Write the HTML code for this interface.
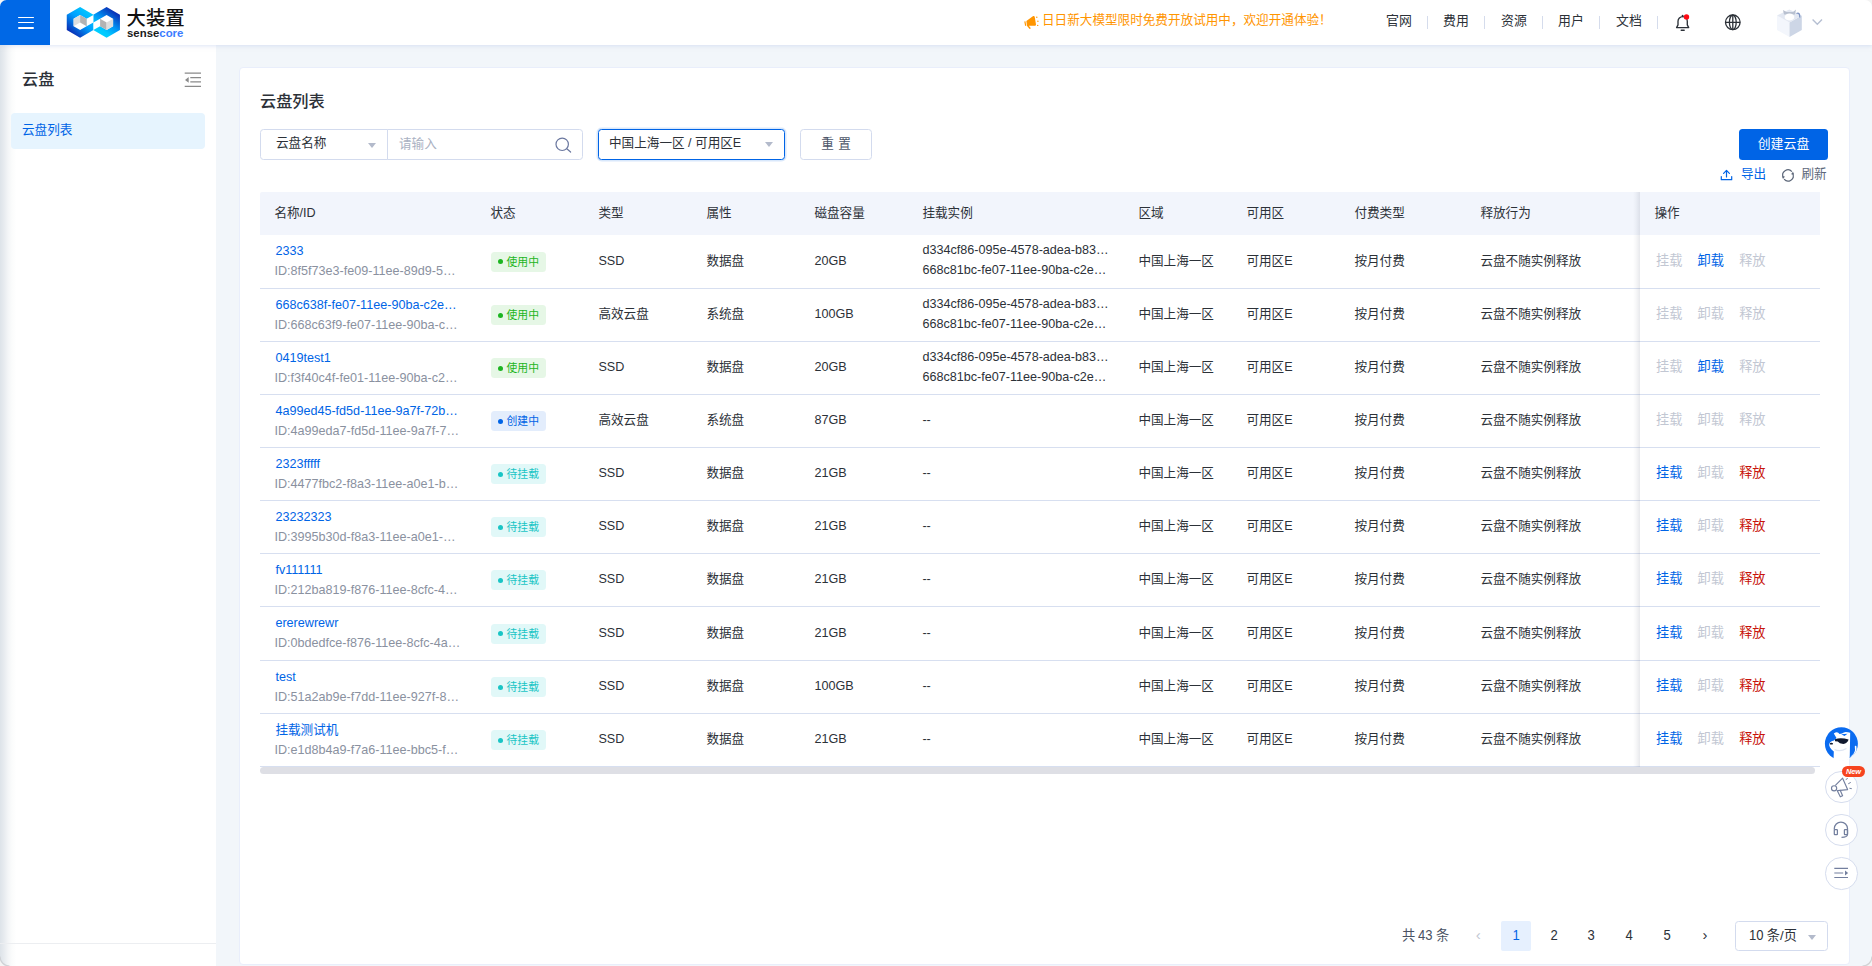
<!DOCTYPE html>
<html lang="zh-CN">
<head>
<meta charset="utf-8">
<title>云盘列表</title>
<style>
*{box-sizing:border-box;margin:0;padding:0}
html,body{width:1872px;height:966px;overflow:hidden}
body{background:#f2f6fa;font-family:"Liberation Sans","Noto Sans CJK SC",sans-serif;font-size:12.6px;line-height:20px;color:#2c3138;position:relative}
svg{display:block;overflow:visible}
/* header */
#hdr{position:absolute;left:0;top:0;width:1872px;height:45px;background:#fff;box-shadow:0 1px 4px rgba(190,203,235,.5);z-index:5}
#burger{position:absolute;left:0;top:0;width:50px;height:45px;background:#0068e6}
#burger i{position:absolute;left:17.5px;width:16.5px;height:1.6px;background:#fff;border-radius:1px}
#logo{position:absolute;left:66px;top:6px}
#brand{position:absolute;left:126.5px;top:5.3px;font-size:19.4px;font-weight:500;color:#111;letter-spacing:0;line-height:26px;white-space:nowrap}
#brand2{position:absolute;left:127px;top:25.2px;font-size:11.4px;font-weight:700;color:#1a1a1a;line-height:16px;white-space:nowrap}
#brand2 b{color:#3b7cff;font-weight:700}
#notice{position:absolute;left:1042px;top:11px;font-size:12.6px;line-height:18px;color:#ff9500;white-space:nowrap}
.nav{position:absolute;top:11px;font-size:12.9px;line-height:20px;color:#2c3138;white-space:nowrap}
.sep{position:absolute;top:16px;width:1px;height:13px;background:#d5dcec}
/* sidebar */
#side{position:absolute;left:0;top:45px;width:216px;height:921px;background:#fff;z-index:2}
#side:before{content:"";position:absolute;left:0;top:0;width:18px;height:100%;background:linear-gradient(90deg,#dde3e9 0,#e7ebef 4px,#f3f5f7 8px,#fbfcfc 12px,#fff 16.5px)}
#sidettl{position:absolute;left:22px;top:23px;font-size:16.2px;font-weight:500;line-height:22px;color:#2c3138}
#sideitem{position:absolute;left:11px;top:68px;width:194px;height:36px;border-radius:4px;background:#e6f4fe;color:#0064e6;font-size:12.6px;line-height:35px;padding-left:11px}
#sidefoot{position:absolute;left:0;top:898px;width:216px;height:1px;background:#eceef1}
/* card */
#card{position:absolute;left:239px;top:67px;width:1611px;height:897.5px;background:#fff;border:1px solid #e9eefb;border-radius:4px}
#ttl{position:absolute;left:260px;top:90px;font-size:16.2px;font-weight:500;line-height:22px;color:#2c3138}
/* filter */
.box{position:absolute;top:129px;height:30.6px;border:1px solid #d3dbee;border-radius:3.5px;background:#fff;line-height:28.6px;white-space:nowrap}
.tri{position:absolute;width:0;height:0;border-left:4.6px solid transparent;border-right:4.6px solid transparent;border-top:5px solid #b3bacb}
#create{position:absolute;left:1739px;top:129px;width:89px;height:31px;background:#0064e6;border-radius:3.5px;color:#fff;text-align:center;line-height:30.5px;font-size:12.9px}
.tool{position:absolute;top:165px;line-height:18px;white-space:nowrap}
/* table */
#tbl{position:absolute;left:260px;top:192px;width:1560px;height:575px;overflow:hidden}
.thead{position:absolute;left:0;top:0;width:100%;height:43px;background:#f2f5fc;border-radius:2px 0 0 0}
.tr{position:absolute;left:0;width:100%;border-bottom:1px solid #d7dff0}
.th,.td{position:absolute;top:0;height:100%;padding-left:14.4px;display:flex;align-items:center;white-space:nowrap}
.td{padding-bottom:2px}.td.c1,.td.c2{padding-bottom:0}
.th{color:#2c3138;padding-bottom:2px}
.c1{left:0;width:216px}.c2{left:216px;width:108px}.c3{left:324px;width:108px}.c4{left:432px;width:108px}.c5{left:540px;width:108px}
.c6{left:648px;width:216px}.c7{left:864px;width:108px}.c8{left:972px;width:108px}.c9{left:1080px;width:126px}.c10{left:1206px;width:180px}
.cop{left:1380px;width:180px;background:#fff;padding-left:16px}
.thead .cop{background:#f2f5fc;padding-left:14.4px}
.two{display:flex;flex-direction:column;line-height:20px;margin-top:-.6px}
.two a{color:#0064e6;padding-left:1px}
.gid{color:#8a919f}
.ins{color:#2c3138}
.tag{display:inline-flex;align-items:center;height:20px;padding:0 7px 0 6.5px;border-radius:3.5px;font-size:10.8px;line-height:20px;margin:.4px 0 0 .7px}
.tag i{display:block;width:5px;height:5px;border-radius:50%;margin-right:4px}
.use{background:#e6f7e6;color:#1cb521}.use i{background:#1cb521}
.new{background:#e3edfc;color:#0064e6}.new i{background:#0064e6}
.wait{background:#e1f8f8;color:#19c5c5}.wait i{background:#19c5c5}
.op{margin-right:15.2px;font-size:13.2px}
.dis{color:#c2c7d3}.lnk{color:#0064e6}.red{color:#c8140a}
#fixshadow{position:absolute;left:1373px;top:0;width:7px;height:100%;background:linear-gradient(90deg,rgba(0,0,0,0),rgba(30,40,70,.035) 45%,rgba(30,40,70,.1))}
#hscroll{position:absolute;left:260px;top:767px;width:1555px;height:7px;border-radius:3.5px;background:#dedfe5}
/* pagination */
.pg{position:absolute;top:921px;height:30px;line-height:30px;white-space:nowrap;text-align:center}
.pn{width:30.6px;color:#2c3138;font-size:15px;line-height:27.5px}
.pn b,.nar{display:inline-block;font-weight:400;transform:scaleX(.87)}
.pact{background:#e6f0fe;color:#0064e6;border-radius:2px}
/* float */
.fb{position:absolute;left:1825px;width:32.4px;height:32.4px;border-radius:50%;background:#fff;border:1px solid #d6ddee;z-index:6}
#newb{position:absolute;left:1842px;top:766px;width:23px;height:11px;border-radius:6px;background:#f6441f;color:#fff;font-size:7.5px;line-height:11px;font-weight:700;font-style:italic;text-align:center;z-index:8;letter-spacing:-.2px}
</style>
</head>
<body>
<div id="hdr">
  <div id="burger"><i style="top:16.5px"></i><i style="top:21.9px"></i><i style="top:27.2px"></i></div>
  <svg id="logo" width="130" height="45" viewBox="0 0 130 45" style="position:absolute;left:0;top:0">
<defs>
<linearGradient id="gl" x1="0.85" y1="0.1" x2="0.2" y2="0.95"><stop offset="0" stop-color="#00ccff"/><stop offset=".45" stop-color="#00a0ff"/><stop offset="1" stop-color="#0a22ad"/></linearGradient>
<linearGradient id="gr" x1="0.8" y1="0.08" x2="0.25" y2="0.92"><stop offset="0" stop-color="#0a22ad"/><stop offset=".5" stop-color="#0094f5"/><stop offset=".8" stop-color="#00c8ff"/><stop offset="1" stop-color="#00d0ff"/></linearGradient>
</defs>
<path d="M80.10 7.00 L93.44 14.70 L93.44 30.10 L80.10 37.80 L66.76 30.10 L66.76 14.70Z M73.60 18.65 L73.60 26.15 L80.10 29.90 L86.60 26.15 L86.60 18.65 L80.10 14.90Z" fill="url(#gl)" fill-rule="evenodd"/>
<path d="M106.60 7.00 L119.94 14.70 L119.94 30.10 L106.60 37.80 L93.26 30.10 L93.26 14.70Z M100.10 18.65 L100.10 26.15 L106.60 29.90 L113.10 26.15 L113.10 18.65 L106.60 14.90Z" fill="url(#gr)" fill-rule="evenodd"/>
<polygon points="86.60,18.65 93.35,14.90 93.35,22.40 86.60,26.15" fill="#fff"/>
<polygon points="93.35,22.40 100.10,18.65 100.10,26.15 93.35,29.90" fill="#fff"/>
<polygon points="80.10,14.90 80.10,22.40 73.60,26.15 73.60,18.65" fill="#dedede"/>
<polygon points="80.10,14.90 86.60,18.65 86.60,26.15 80.10,22.40" fill="#b3b3b3"/>
<polygon points="100.10,18.65 106.60,22.40 106.60,29.90 100.10,26.15" fill="#b3b3b3"/>
<polygon points="106.60,22.40 113.10,18.65 113.10,26.15 106.60,29.90" fill="#dedede"/>
</svg>
  <div id="brand">大装置</div>
  <div id="brand2">sense<b>core</b></div>
  <div id="notice">日日新大模型限时免费开放试用中，欢迎开通体验！</div>
  <div class="nav" style="left:1386px">官网</div><i class="sep" style="left:1427px"></i>
  <div class="nav" style="left:1443px">费用</div><i class="sep" style="left:1484px"></i>
  <div class="nav" style="left:1501px">资源</div><i class="sep" style="left:1542px"></i>
  <div class="nav" style="left:1558px">用户</div><i class="sep" style="left:1599px"></i>
  <div class="nav" style="left:1616px">文档</div><i class="sep" style="left:1657px"></i>

  <svg width="1872" height="45" viewBox="0 0 1872 45" style="position:absolute;left:0;top:0;pointer-events:none">
    <!-- megaphone -->
    <g fill="#ff9500">
      <path d="M1024.3 21.6 L1025.4 21.3 L1026.2 25.6 L1025.1 25.9 Z"/>
      <path d="M1026.4 20.9 L1033.2 16 Q1034.3 15.6 1034.7 16.8 L1036 24.6 Q1036 25.8 1034.9 25.8 L1028.8 25.8 L1030.9 28.2 L1029.6 28.9 L1026.9 25.7 Z"/>
      <circle cx="1036.8" cy="17.2" r=".7"/><circle cx="1037.9" cy="21.2" r=".7"/><circle cx="1037.7" cy="25.4" r=".7"/>
    </g>
    <!-- bell -->
    <g fill="none" stroke="#2c3138" stroke-width="1.35" stroke-linecap="round" stroke-linejoin="round">
      <path d="M1676.6 27.6 H1688.7 L1687.3 24.9 V21.3 A4.65 4.65 0 0 0 1678 21.3 V24.9 Z"/>
      <path d="M1681.2 30.2 H1684.2"/>
      <path d="M1682.65 16.5 V15.3"/>
    </g>
    <circle cx="1686.5" cy="16.9" r="2.7" fill="#ff0a14"/>
    <!-- globe -->
    <g fill="none" stroke="#2c3138" stroke-width="1.3">
      <circle cx="1732.8" cy="22.3" r="7.3"/>
      <ellipse cx="1732.8" cy="22.3" rx="3.4" ry="7.3"/>
      <path d="M1725.5 22.3 H1740.1 M1732.8 15 V29.6"/>
    </g>
    <!-- avatar box -->
    <g>
      <polygon points="1777,15.5 1789.5,22.5 1789.5,37 1777,30" fill="#f3f6fc"/>
      <polygon points="1789.5,22.5 1801.8,15.5 1801.8,30 1789.5,37" fill="#cdd6e6"/>
      <polygon points="1777,15.5 1789.3,9.5 1801.8,15.5 1789.5,22.5" fill="#e3e8f2"/>
      <path d="M1783 10 L1784 14.5 L1795 14.5 L1796 9.5 L1793 12 L1786.5 12 Z" fill="#b9c1d0"/>
      <ellipse cx="1789.5" cy="17" rx="4.8" ry="3.6" fill="#fff"/>
      <path d="M1796.5 13.5 Q1800 12 1799.8 17.5" fill="none" stroke="#7d93c2" stroke-width="1.3"/>
    </g>
    <path d="M1812.6 19.6 L1817.3 24.3 L1822 19.6" fill="none" stroke="#b6bfd2" stroke-width="1.4"/>
  </svg>
</div>
<div id="side">
  <div id="sidettl">云盘</div>
  <svg width="20" height="18" viewBox="183 70 20 18" style="position:absolute;left:183px;top:25px"><g stroke="#8a8a8a" stroke-width="1.25" fill="none"><path d="M184.7 73.2H201M190.3 77.6H201M190.3 81.9H201M184.7 86.3H201"/></g><path d="M188.7 77.1V82.7L185 79.9Z" fill="#8a8a8a"/></svg>
  <div id="sideitem">云盘列表</div>
  <div id="sidefoot"></div>
</div>
<div id="card"></div>
<div id="ttl">云盘列表</div>
<div class="box" style="left:260px;width:128px;border-radius:3.5px 0 0 3.5px;padding-left:15px;line-height:27px">云盘名称<i class="tri" style="left:107px;top:13px"></i></div>
<div class="box" style="left:387px;width:196px;border-radius:0 3.5px 3.5px 0;padding-left:11px;color:#a9b1c2">请输入</div>
<div class="box" style="left:598px;width:187px;border:1.5px solid #0064e6;box-shadow:0 0 0 1.5px rgba(0,100,230,.15);padding-left:10px;line-height:27.6px">中国上海一区 / 可用区E<i class="tri" style="left:166px;top:11.7px"></i></div>
<div class="box" style="left:800px;width:72px;text-align:center;color:#4d5669;word-spacing:1px">重 置</div>
<div id="create">创建云盘</div>
<div class="tool" style="left:1741px;color:#0064e6">导出</div>
<div class="tool" style="left:1801.5px;color:#5c6779">刷新</div>
<svg width="1872" height="200" viewBox="0 0 1872 200" style="position:absolute;left:0;top:0;pointer-events:none">
  <g fill="none" stroke="#6a779f" stroke-width="1.2" stroke-linecap="round"><circle cx="562.2" cy="144.3" r="6.2"/><path d="M566.8 148.8L570.6 152"/></g>
  <g fill="none" stroke="#0064e6" stroke-width="1.2" stroke-linecap="round" stroke-linejoin="round"><path d="M1721.3 176.6V179.7H1731.7V176.6"/><path d="M1726.5 177V170.6M1723.6 173.3L1726.5 170.4L1729.4 173.3"/></g>
  <g fill="none" stroke="#5c6779" stroke-width="1.2"><path d="M1783.3 177.3A5.2 5.2 0 0 1 1791.9 171.6"/><path d="M1792.7 173.5A5.2 5.2 0 0 1 1784.1 179.2"/></g>
  <path d="M1781.9 176.2L1785 176.6L1783 179Z M1794.1 174.6L1791 174.2L1793 171.8Z" fill="#5c6779"/>
</svg>
<div id="tbl">
<div class="thead"><div class="th c1">名称/ID</div><div class="th c2">状态</div><div class="th c3">类型</div><div class="th c4">属性</div><div class="th c5">磁盘容量</div><div class="th c6">挂载实例</div><div class="th c7">区域</div><div class="th c8">可用区</div><div class="th c9">付费类型</div><div class="th c10">释放行为</div><div class="th cop">操作</div></div>
<div class="tr" style="top:43px;height:54px"><div class="td c1"><div class="two"><a>2333</a><span class="gid">ID:8f5f73e3-fe09-11ee-89d9-5…</span></div></div><div class="td c2"><span class="tag use"><i></i>使用中</span></div><div class="td c3">SSD</div><div class="td c4">数据盘</div><div class="td c5">20GB</div><div class="td c6"><div class="two ins"><span>d334cf86-095e-4578-adea-b83…</span><span>668c81bc-fe07-11ee-90ba-c2e…</span></div></div><div class="td c7">中国上海一区</div><div class="td c8">可用区E</div><div class="td c9">按月付费</div><div class="td c10">云盘不随实例释放</div><div class="td cop"><span class="op dis">挂载</span><span class="op lnk">卸载</span><span class="op dis">释放</span></div></div>
<div class="tr" style="top:97px;height:53px"><div class="td c1"><div class="two"><a>668c638f-fe07-11ee-90ba-c2e…</a><span class="gid">ID:668c63f9-fe07-11ee-90ba-c…</span></div></div><div class="td c2"><span class="tag use"><i></i>使用中</span></div><div class="td c3">高效云盘</div><div class="td c4">系统盘</div><div class="td c5">100GB</div><div class="td c6"><div class="two ins"><span>d334cf86-095e-4578-adea-b83…</span><span>668c81bc-fe07-11ee-90ba-c2e…</span></div></div><div class="td c7">中国上海一区</div><div class="td c8">可用区E</div><div class="td c9">按月付费</div><div class="td c10">云盘不随实例释放</div><div class="td cop"><span class="op dis">挂载</span><span class="op dis">卸载</span><span class="op dis">释放</span></div></div>
<div class="tr" style="top:150px;height:53px"><div class="td c1"><div class="two"><a>0419test1</a><span class="gid">ID:f3f40c4f-fe01-11ee-90ba-c2…</span></div></div><div class="td c2"><span class="tag use"><i></i>使用中</span></div><div class="td c3">SSD</div><div class="td c4">数据盘</div><div class="td c5">20GB</div><div class="td c6"><div class="two ins"><span>d334cf86-095e-4578-adea-b83…</span><span>668c81bc-fe07-11ee-90ba-c2e…</span></div></div><div class="td c7">中国上海一区</div><div class="td c8">可用区E</div><div class="td c9">按月付费</div><div class="td c10">云盘不随实例释放</div><div class="td cop"><span class="op dis">挂载</span><span class="op lnk">卸载</span><span class="op dis">释放</span></div></div>
<div class="tr" style="top:203px;height:53px"><div class="td c1"><div class="two"><a>4a99ed45-fd5d-11ee-9a7f-72b…</a><span class="gid">ID:4a99eda7-fd5d-11ee-9a7f-7…</span></div></div><div class="td c2"><span class="tag new"><i></i>创建中</span></div><div class="td c3">高效云盘</div><div class="td c4">系统盘</div><div class="td c5">87GB</div><div class="td c6">--</div><div class="td c7">中国上海一区</div><div class="td c8">可用区E</div><div class="td c9">按月付费</div><div class="td c10">云盘不随实例释放</div><div class="td cop"><span class="op dis">挂载</span><span class="op dis">卸载</span><span class="op dis">释放</span></div></div>
<div class="tr" style="top:256px;height:53px"><div class="td c1"><div class="two"><a>2323fffff</a><span class="gid">ID:4477fbc2-f8a3-11ee-a0e1-b…</span></div></div><div class="td c2"><span class="tag wait"><i></i>待挂载</span></div><div class="td c3">SSD</div><div class="td c4">数据盘</div><div class="td c5">21GB</div><div class="td c6">--</div><div class="td c7">中国上海一区</div><div class="td c8">可用区E</div><div class="td c9">按月付费</div><div class="td c10">云盘不随实例释放</div><div class="td cop"><span class="op lnk">挂载</span><span class="op dis">卸载</span><span class="op red">释放</span></div></div>
<div class="tr" style="top:309px;height:53px"><div class="td c1"><div class="two"><a>23232323</a><span class="gid">ID:3995b30d-f8a3-11ee-a0e1-…</span></div></div><div class="td c2"><span class="tag wait"><i></i>待挂载</span></div><div class="td c3">SSD</div><div class="td c4">数据盘</div><div class="td c5">21GB</div><div class="td c6">--</div><div class="td c7">中国上海一区</div><div class="td c8">可用区E</div><div class="td c9">按月付费</div><div class="td c10">云盘不随实例释放</div><div class="td cop"><span class="op lnk">挂载</span><span class="op dis">卸载</span><span class="op red">释放</span></div></div>
<div class="tr" style="top:362px;height:53px"><div class="td c1"><div class="two"><a>fv111111</a><span class="gid">ID:212ba819-f876-11ee-8cfc-4…</span></div></div><div class="td c2"><span class="tag wait"><i></i>待挂载</span></div><div class="td c3">SSD</div><div class="td c4">数据盘</div><div class="td c5">21GB</div><div class="td c6">--</div><div class="td c7">中国上海一区</div><div class="td c8">可用区E</div><div class="td c9">按月付费</div><div class="td c10">云盘不随实例释放</div><div class="td cop"><span class="op lnk">挂载</span><span class="op dis">卸载</span><span class="op red">释放</span></div></div>
<div class="tr" style="top:415px;height:54px"><div class="td c1"><div class="two"><a>ererewrewr</a><span class="gid">ID:0bdedfce-f876-11ee-8cfc-4a…</span></div></div><div class="td c2"><span class="tag wait"><i></i>待挂载</span></div><div class="td c3">SSD</div><div class="td c4">数据盘</div><div class="td c5">21GB</div><div class="td c6">--</div><div class="td c7">中国上海一区</div><div class="td c8">可用区E</div><div class="td c9">按月付费</div><div class="td c10">云盘不随实例释放</div><div class="td cop"><span class="op lnk">挂载</span><span class="op dis">卸载</span><span class="op red">释放</span></div></div>
<div class="tr" style="top:469px;height:53px"><div class="td c1"><div class="two"><a>test</a><span class="gid">ID:51a2ab9e-f7dd-11ee-927f-8…</span></div></div><div class="td c2"><span class="tag wait"><i></i>待挂载</span></div><div class="td c3">SSD</div><div class="td c4">数据盘</div><div class="td c5">100GB</div><div class="td c6">--</div><div class="td c7">中国上海一区</div><div class="td c8">可用区E</div><div class="td c9">按月付费</div><div class="td c10">云盘不随实例释放</div><div class="td cop"><span class="op lnk">挂载</span><span class="op dis">卸载</span><span class="op red">释放</span></div></div>
<div class="tr" style="top:522px;height:53px"><div class="td c1"><div class="two"><a>挂载测试机</a><span class="gid">ID:e1d8b4a9-f7a6-11ee-bbc5-f…</span></div></div><div class="td c2"><span class="tag wait"><i></i>待挂载</span></div><div class="td c3">SSD</div><div class="td c4">数据盘</div><div class="td c5">21GB</div><div class="td c6">--</div><div class="td c7">中国上海一区</div><div class="td c8">可用区E</div><div class="td c9">按月付费</div><div class="td c10">云盘不随实例释放</div><div class="td cop"><span class="op lnk">挂载</span><span class="op dis">卸载</span><span class="op red">释放</span></div></div>
<div id="fixshadow"></div></div>
<div id="hscroll"></div>
<div class="pg" style="left:1402px;color:#4a5263;font-size:13.2px;line-height:27px">共 <span class="nar" style="font-size:15px;margin:0 -1.6px">43</span> 条</div>
<div class="pg pn" style="left:1463px;color:#c2c7d3">‹</div>
<div class="pg pn pact" style="left:1500.7px"><b>1</b></div>
<div class="pg pn" style="left:1538.5px"><b>2</b></div>
<div class="pg pn" style="left:1576.3px"><b>3</b></div>
<div class="pg pn" style="left:1614.1px"><b>4</b></div>
<div class="pg pn" style="left:1651.9px"><b>5</b></div>
<div class="pg pn" style="left:1689.7px">›</div>
<div class="pg" style="left:1735.3px;width:92.5px;border:1px solid #d3dbee;border-radius:3.5px;text-align:left;padding-left:13px;line-height:25.5px;font-size:13.2px"><span class="nar" style="font-size:15px;margin:0 -1.4px">10</span> 条/页<i class="tri" style="left:71.5px;top:12.5px"></i></div>
<div class="fb" style="left:1825.2px;top:771px"></div>
<div class="fb" style="left:1825.2px;top:814px"></div>
<div class="fb" style="left:1825.2px;top:857.2px"></div>
<div id="newb">New</div>
<svg width="60" height="180" viewBox="1815 720 60 180" style="position:absolute;left:1815px;top:720px;z-index:7">
  <defs><clipPath id="dogc"><circle cx="1841.4" cy="743.7" r="16.5"/></clipPath></defs>
  <circle cx="1841.4" cy="743.7" r="16.5" fill="#0a6bf0"/>
  <g clip-path="url(#dogc)">
    <path d="M1833.5 761 L1833.8 751.5 Q1828.5 747.5 1829.3 743.8 Q1830 741.5 1834 740.6 L1836.5 738 L1833.8 733.5 Q1837.5 731 1839.5 734 L1842 733.5 Q1844.5 731.2 1848 732.3 L1850.2 732.8 L1849.8 755 L1849.5 761 Z" fill="#fff"/>
    <path d="M1841.2 734.2 L1844.5 736 L1847.5 733.8 Z" fill="#0a6bf0"/>
    <path d="M1835 739.2 Q1841 737.3 1848.6 739.6 Q1847.5 743.6 1843.3 743.9 Q1839.3 743.8 1837.8 741.4 L1835 741.2 Z" fill="#10192e"/>
    <ellipse cx="1831.4" cy="743.7" rx="1.6" ry=".9" fill="#10192e"/>
    <path d="M1834.5 749.5 Q1840 752.3 1846.5 748.5" fill="none" stroke="#dfe6f2" stroke-width="1.2"/>
    <path d="M1851.5 757 Q1856.8 753 1855.6 746.5" fill="none" stroke="#fff" stroke-width="1.6" stroke-linecap="round"/>
  </g>
  <path d="M1833.6 758.2A16.5 16.5 0 0 0 1849.4 758.1" fill="none" stroke="#fff" stroke-width="1.6"/>
  <!-- megaphone outline -->
  <g fill="none" stroke="#737f9e" stroke-width="1.15" stroke-linejoin="round" stroke-linecap="round">
    <path d="M1835.6 785.2 L1842.6 778.2 L1847.6 789.6 L1837.6 790.6"/>
    <circle cx="1834.1" cy="788.3" r="2.6"/>
    <path d="M1837.3 790.8 L1840.3 796.8 L1842.6 795.8 L1840.3 790.4"/>
    <path d="M1846.1 779.4 L1847.4 778.6 M1848.6 783.6 L1850.4 782.6 M1849.8 788.3 L1851.4 788.6" stroke-width="1"/>
  </g>
  <!-- headset -->
  <g fill="none" stroke="#737f9e" stroke-width="1.25" stroke-linejoin="round">
    <path d="M1834.3 829.5 V828.6 A6.6 6.6 0 0 1 1847.5 828.6 V834.5 Q1847.3 837.3 1841.5 837.3"/>
    <rect x="1834.3" y="829.6" width="3.1" height="4.9" rx=".6"/>
    <rect x="1844.4" y="829.6" width="3.1" height="4.9" rx=".6"/>
  </g>
  <!-- collapse -->
  <g stroke="#737f9e" stroke-width="1.2" fill="none"><path d="M1834.3 868.3H1848M1834.3 873H1843.2M1834.3 877.5H1848"/></g>
  <path d="M1845 870.4L1848.1 873L1845 875.6Z" fill="#737f9e"/>
</svg>
<svg width="1872" height="966" viewBox="0 0 1872 966" style="position:absolute;left:0;top:0;z-index:20;pointer-events:none">
  <path d="M0 0H6.5A6.5 6.5 0 0 0 0 6.5Z" fill="#f7f7f6"/>
  <path d="M1872 0H1865A7 7 0 0 1 1872 7Z" fill="#f3f3f3"/>
  <path d="M0 966V957A9 9 0 0 0 9 966Z" fill="#f4f4f4"/><path d="M0 956.5A9.5 9.5 0 0 0 9.5 966" fill="none" stroke="#cfd2d6" stroke-width="1.2"/>
  <path d="M1872 966V957A9 9 0 0 1 1863 966Z" fill="#f4f4f4"/><path d="M1872 956.5A9.5 9.5 0 0 1 1862.5 966" fill="none" stroke="#d2d3d5" stroke-width="1.2"/>
</svg>
</body>
</html>
